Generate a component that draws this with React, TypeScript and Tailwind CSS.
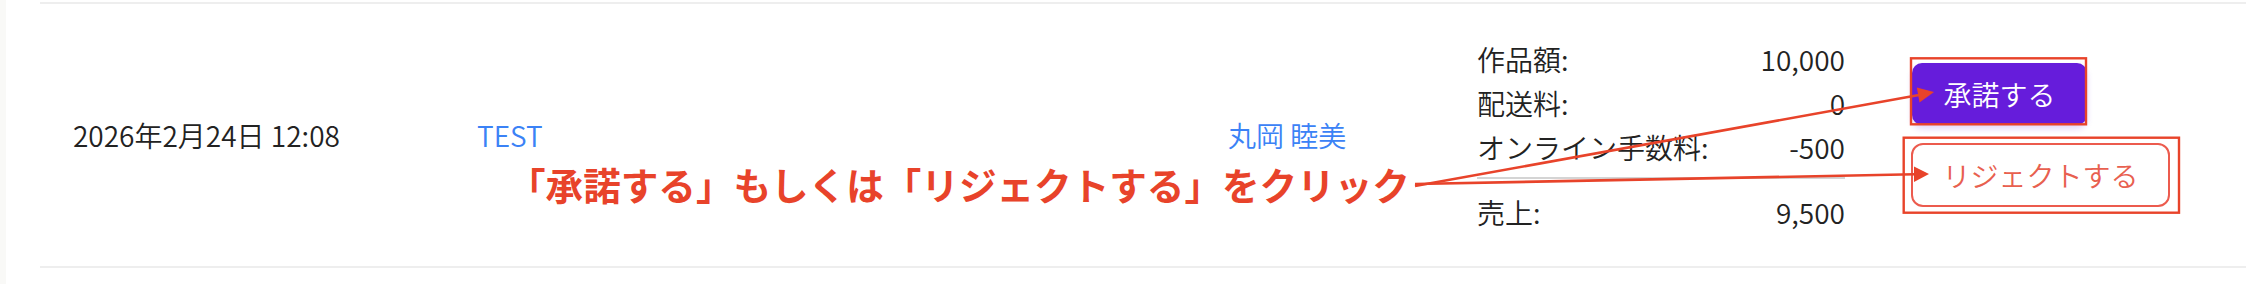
const RED = "#e8432a";

function Breakdown() {
  const rows: [string, string][] = [
    ["作品額:", "10,000"],
    ["配送料:", "0"],
    ["オンライン手数料:", "-500"],
  ];
  return (
    <div className="flex w-[368px] flex-col leading-[44px]">
      {rows.map(([label, value]) => (
        <div key={label} className="flex justify-between">
          <span>{label}</span>
          <span>{value}</span>
        </div>
      ))}
      <div className="mt-[8px] mb-[11px] h-[2px] bg-[#d4d4d4]" />
      <div className="flex justify-between">
        <span>売上:</span>
        <span>9,500</span>
      </div>
    </div>
  );
}

function Annotation() {
  return (
    <>
      <div className="absolute top-[165px] left-[508px] text-[37.6px] leading-none font-bold whitespace-nowrap text-[#e8432a]">
        「承諾する」もしくは「リジェクトする」をクリック
      </div>
      <svg
        className="pointer-events-none absolute inset-0"
        width={2266}
        height={284}
        viewBox="0 0 2266 284"
      >
        {/* 承諾する への矢印 */}
        <line x1={1415} y1={186} x2={1919} y2={95} stroke={RED} strokeWidth={2.6} />
        <polygon points="1934,92 1919.5,102.5 1916.8,87.5" fill={RED} />
        {/* リジェクトする への矢印 */}
        <line x1={1415} y1={184} x2={1915} y2={174.3} stroke={RED} strokeWidth={2.6} />
        <polygon points="1929,174 1914,166.5 1914,182" fill={RED} />
        {/* 枠 */}
        <rect x={1911} y={58.3} width={175} height={66} fill="none" stroke={RED} strokeWidth={2.4} />
        <rect x={1903.7} y={137.7} width={275.3} height={75} fill="none" stroke={RED} strokeWidth={2.4} />
      </svg>
    </>
  );
}

export default function App() {
  return (
    <div className="relative flex h-[284px] w-[2266px] overflow-hidden bg-white font-['Noto_Sans_CJK_JP','Noto_Sans',sans-serif] text-[28px] font-[350] text-[#222222]">
      <div className="w-[6px] shrink-0 bg-[#f9f9f7]" />
      <div className="ml-[34px] w-[2206px]">
        <div className="mt-[2px] flex h-[266px] items-center border-y-2 border-[#eeeeee] pl-[33px]">
          <div className="w-[404px] shrink-0">2026年2月24日 12:08</div>
          <div className="w-[751px] shrink-0 text-[#3b82f6]">TEST</div>
          <div className="w-[249px] shrink-0 text-[#3b82f6]">丸岡 睦美</div>
          <Breakdown />
          <div className="ml-[66px] flex flex-col items-start gap-[18px]">
            <button className="ml-[1px] h-[62px] w-[175px] rounded-[10px] bg-[#661cdb] text-white shadow-[0_4px_6px_rgba(102,28,219,0.18)]">
              承諾する
            </button>
            <button className="h-[64px] w-[259px] rounded-[12px] border-2 border-[#ec5b4e] bg-white text-[#e8604f]">
              リジェクトする
            </button>
          </div>
        </div>
      </div>
      <Annotation />
    </div>
  );
}
